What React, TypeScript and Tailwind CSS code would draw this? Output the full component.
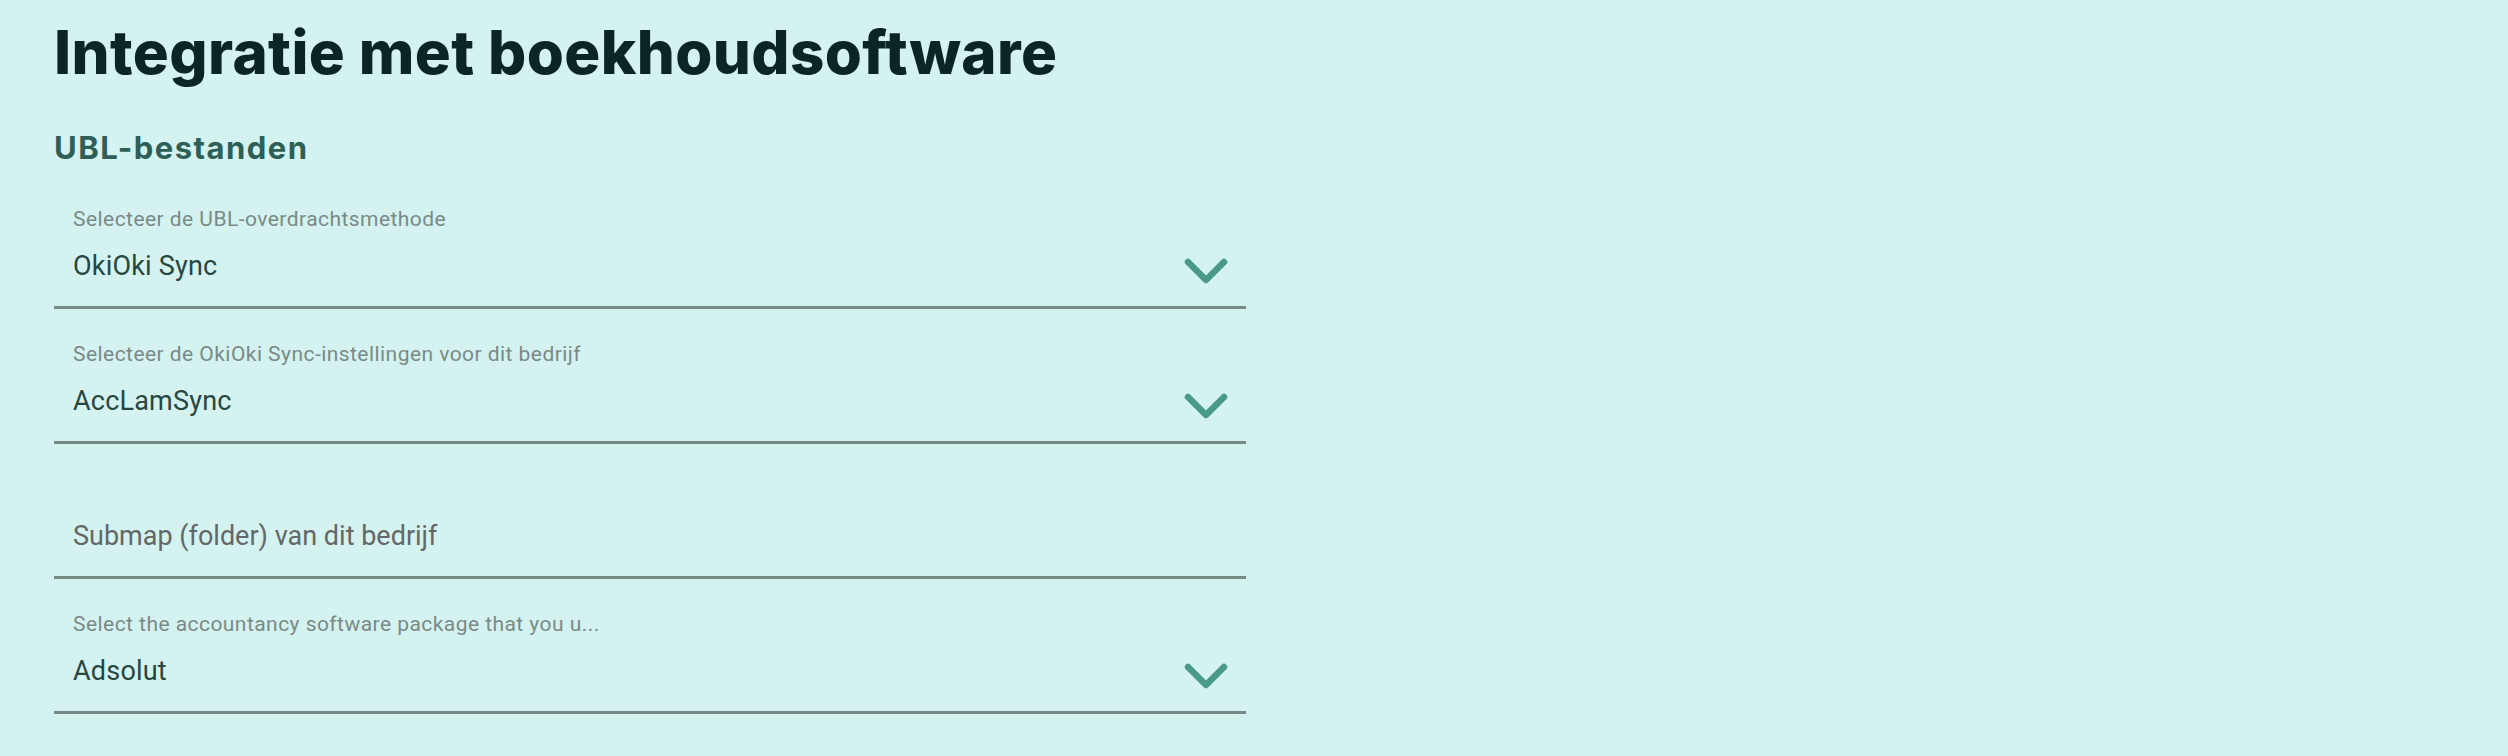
import React from "react";

function Chevron() {
  return (
    <svg width="44" height="26" viewBox="0 0 44 26" className="mt-[10px] shrink-0">
      <path d="M4 4 L22 22 L40 4" fill="none" stroke="#4a9a89" strokeWidth="6.5" strokeLinecap="round" strokeLinejoin="round" />
    </svg>
  );
}

function Field({ label, value, placeholder, select }: { label?: string; value?: string; placeholder?: string; select?: boolean }) {
  return (
    <div className="w-[1192px] border-b-[3px] border-[#768985] pt-[33px] pb-[23px] pl-[19px] pr-[18px]">
      <div className="h-[24px] text-[21px] leading-[24px] tracking-[0.45px] text-[#7a8a86]">{label ?? "\u00a0"}</div>
      <div className="mt-[18px] flex h-[34px] items-center justify-between">
        {value ? (
          <span className="text-[27px] leading-[34px] tracking-[0.2px] text-[#274743]">{value}</span>
        ) : (
          <span className="text-[27px] leading-[34px] text-[#646767]">{placeholder}</span>
        )}
        {select && <Chevron />}
      </div>
    </div>
  );
}

export default function App() {
  return (
    <div className="min-h-[756px] w-full bg-[#d4f2f0] px-[54px] pt-[16px]" style={{ fontFamily: "Roboto, 'Noto Sans', sans-serif" }}>
      <h1 className="text-[60px] leading-[72px] font-extrabold tracking-[0.4px] text-[#0b2524]" style={{ fontFamily: "Inter, sans-serif" }}>
        Integratie met boekhoudsoftware
      </h1>
      <h2 className="mt-[42px] text-[31px] leading-[36px] font-bold tracking-[1.5px] text-[#2d5f57]" style={{ fontFamily: "Inter, sans-serif" }}>
        UBL-bestanden
      </h2>
      <div className="mt-[8px] flex flex-col">
        <Field label="Selecteer de UBL-overdrachtsmethode" value="OkiOki Sync" select />
        <Field label="Selecteer de OkiOki Sync-instellingen voor dit bedrijf" value="AccLamSync" select />
        <Field placeholder="Submap (folder) van dit bedrijf" />
        <Field label="Select the accountancy software package that you u..." value="Adsolut" select />
      </div>
    </div>
  );
}
